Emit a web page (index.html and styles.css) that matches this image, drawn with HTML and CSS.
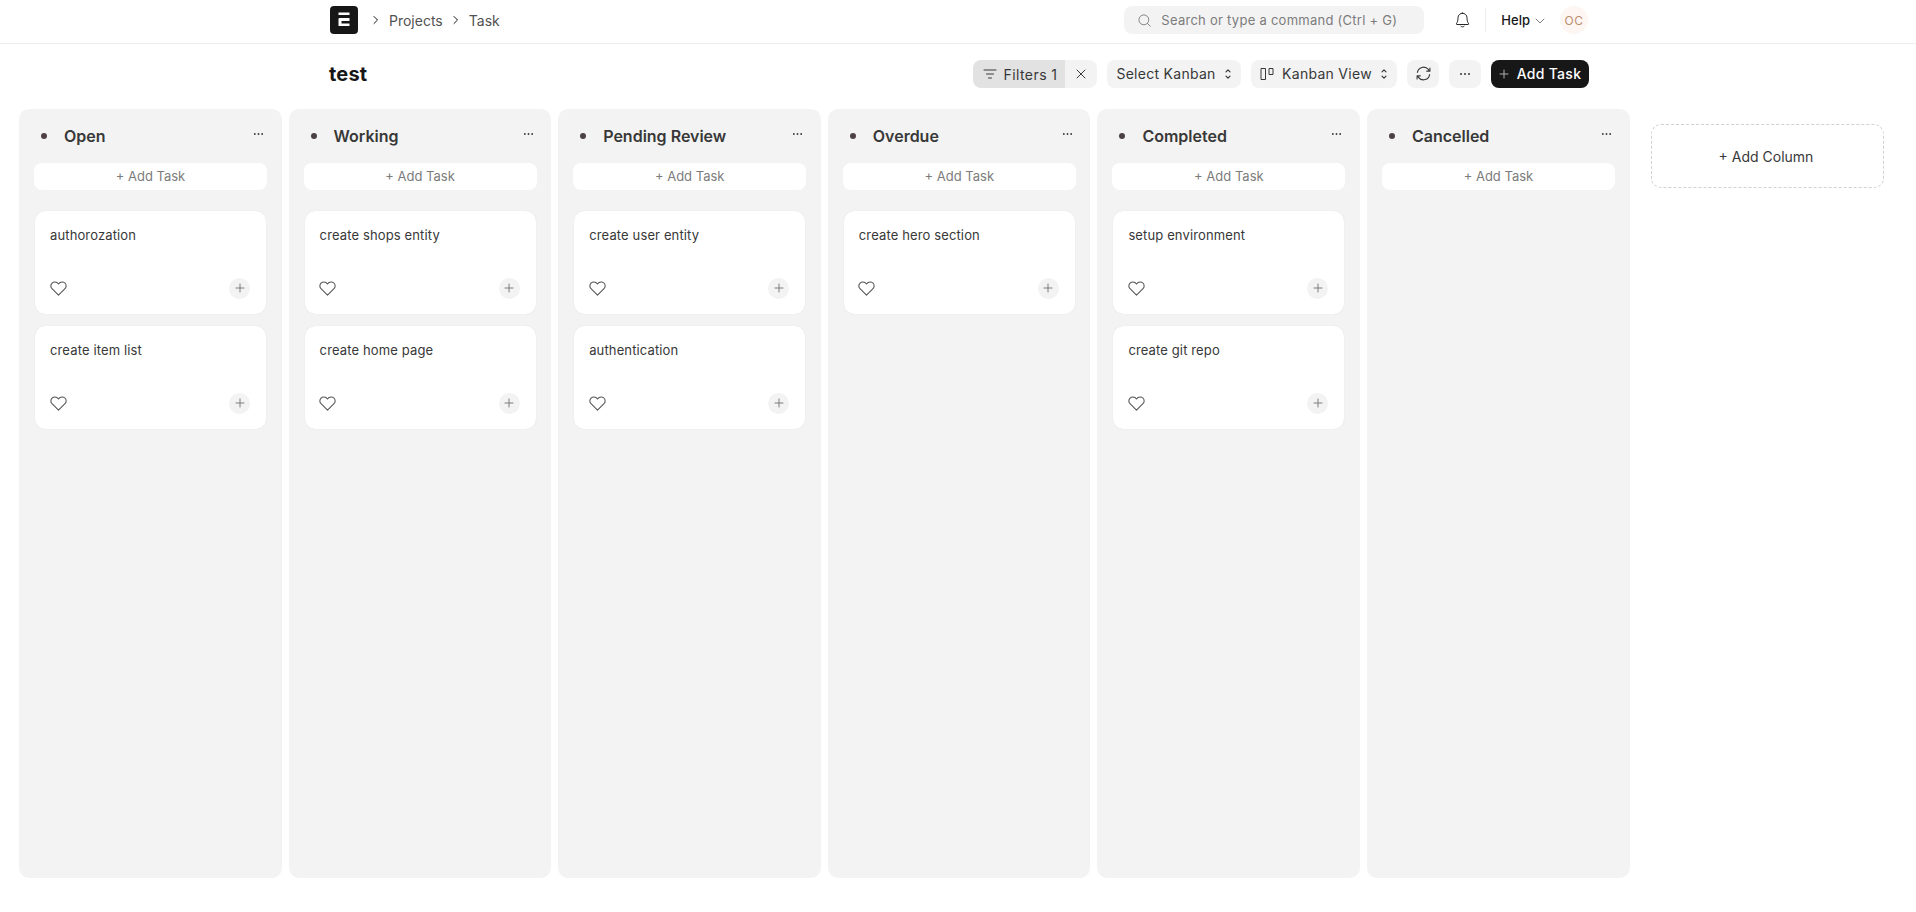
FILE: index.html
```html
<!DOCTYPE html>
<html lang="en">
<head>
<meta charset="utf-8">
<title>Task Kanban</title>
<link rel="stylesheet" href="styles.css">
</head>
<body>
<svg class="defs" width="0" height="0" aria-hidden="true">
  <symbol id="i-heart" viewBox="0 0 16 14"><path d="M8 13.2 1.900 7.200A3.600 3.600 0 0 1 .8 4.600C.8 2.500 2.500.8 4.600.8c1.400 0 2.600.7 3.400 2 .8-1.300 2-2 3.400-2 2.100 0 3.800 1.700 3.800 3.800 0 1-.4 1.900-1.100 2.600L8 13.200Z" fill="none" stroke="currentColor" stroke-width="1" stroke-linejoin="round"/></symbol>
  <symbol id="i-plus" viewBox="0 0 10 10"><path d="M5 1v8M1 5h8" fill="none" stroke="currentColor" stroke-width="1" stroke-linecap="round"/></symbol>
  <symbol id="i-dots" viewBox="0 0 12 4"><circle cx="2" cy="2" r="1" fill="currentColor"/><circle cx="6" cy="2" r="1" fill="currentColor"/><circle cx="10" cy="2" r="1" fill="currentColor"/></symbol>
  <symbol id="i-updown" viewBox="0 0 8 12"><path d="M2 3.800 4 1.800l2 2M2 8.200l2 2 2-2" fill="none" stroke="currentColor" stroke-width="1.200" stroke-linecap="round" stroke-linejoin="round"/></symbol>
  <symbol id="i-chev" viewBox="0 0 8 10"><path d="M2 1.500 5.500 5 2 8.500" fill="none" stroke="currentColor" stroke-width="1" stroke-linecap="round" stroke-linejoin="round"/></symbol>
</svg>

<header class="navbar">
  <div class="nav-inner">
    <svg class="logo" width="28" height="28" viewBox="0 0 28 28" aria-label="Logo"><rect width="28" height="28" rx="4" fill="#171717"/><path d="M8.500 6.500h11V9h-11zM8.500 20v-7a1 1 0 0 1 1-1h10v3h-8v2.500h8V20Z" fill="#fff"/></svg>
    <nav class="crumbs">
      <svg class="crumb-chev"><use href="#i-chev"/></svg><span>Projects</span>
      <svg class="crumb-chev"><use href="#i-chev"/></svg><span>Task</span>
    </nav>
    <div class="nav-right">
      <div class="search">
        <svg class="search-icon" width="13" height="13" viewBox="0 0 14 14"><circle cx="6.300" cy="6.300" r="5.300" fill="none" stroke="currentColor"/><path d="m10.200 10.200 3 3" stroke="currentColor" stroke-linecap="round"/></svg>
        <span>Search or type a command (Ctrl + G)</span>
      </div>
      <svg class="bell" width="15" height="16" viewBox="0 0 16 17"><path d="M8 1.200a4.800 4.800 0 0 0-4.800 4.800c0 3.300-.7 5-1.700 6.400-.3.400 0 .9.500.9h12c.5 0 .8-.5.500-.9-1-1.400-1.700-3.100-1.700-6.400A4.800 4.800 0 0 0 8 1.200ZM6.300 15.200c.9.900 2.500.9 3.400 0" fill="none" stroke="currentColor" stroke-linecap="round" stroke-linejoin="round"/></svg>
      <span class="divider"></span>
      <div class="help"><span>Help</span><svg width="10" height="6" viewBox="0 0 10 6"><path d="m1 1 4 4 4-4" fill="none" stroke="currentColor" stroke-linecap="round" stroke-linejoin="round"/></svg></div>
      <div class="avatar">OC</div>
    </div>
  </div>
</header>

<section class="page-head">
  <h1>test</h1>
  <div class="actions">
    <div class="filter-group">
      <button class="filter-main"><svg width="14" height="10" viewBox="0 0 14 10"><path d="M1 1h12M3.500 5h7M5.500 9h3" fill="none" stroke="currentColor" stroke-linecap="round"/></svg><span>Filters 1</span></button>
      <button class="filter-clear"><svg width="10" height="10" viewBox="0 0 10 10"><path d="m1 1 8 8M9 1 1 9" fill="none" stroke="currentColor" stroke-linecap="round"/></svg></button>
    </div>
    <button class="btn btn-select"><span>Select Kanban</span><svg class="updown"><use href="#i-updown"/></svg></button>
    <button class="btn btn-view"><svg width="14" height="14" viewBox="0 0 14 14"><path d="M1 1.500h4.500v11H1zM9 1.500h4v6H9z" fill="none" stroke="currentColor" stroke-linejoin="round"/></svg><span>Kanban View</span><svg class="updown"><use href="#i-updown"/></svg></button>
    <button class="btn btn-icon"><svg width="15" height="15" viewBox="0 0 14 14"><path d="M1.300 6A5.800 5.800 0 0 1 11.500 3.200L12.800 4.800M12.700 8A5.800 5.800 0 0 1 2.500 10.800L1.200 9.200M13 1.800v3h-3M1 12.200v-3h3" fill="none" stroke="currentColor" stroke-linecap="round" stroke-linejoin="round"/></svg></button>
    <button class="btn btn-icon"><svg class="dots"><use href="#i-dots"/></svg></button>
    <button class="btn btn-primary"><svg class="primary-plus"><use href="#i-plus"/></svg><span>Add Task</span></button>
  </div>
</section>

<main class="board">
  <section class="column">
    <div class="col-head"><span class="dot"></span><h2>Open</h2><svg class="dots"><use href="#i-dots"/></svg></div>
    <button class="add-task">+ Add Task</button>
    <article class="card"><p>authorozation</p><div class="card-foot"><svg class="heart"><use href="#i-heart"/></svg><span class="card-plus"><svg><use href="#i-plus"/></svg></span></div></article>
    <article class="card"><p>create item list</p><div class="card-foot"><svg class="heart"><use href="#i-heart"/></svg><span class="card-plus"><svg><use href="#i-plus"/></svg></span></div></article>
  </section>
  <section class="column">
    <div class="col-head"><span class="dot"></span><h2>Working</h2><svg class="dots"><use href="#i-dots"/></svg></div>
    <button class="add-task">+ Add Task</button>
    <article class="card"><p>create shops entity</p><div class="card-foot"><svg class="heart"><use href="#i-heart"/></svg><span class="card-plus"><svg><use href="#i-plus"/></svg></span></div></article>
    <article class="card"><p>create home page</p><div class="card-foot"><svg class="heart"><use href="#i-heart"/></svg><span class="card-plus"><svg><use href="#i-plus"/></svg></span></div></article>
  </section>
  <section class="column">
    <div class="col-head"><span class="dot"></span><h2>Pending Review</h2><svg class="dots"><use href="#i-dots"/></svg></div>
    <button class="add-task">+ Add Task</button>
    <article class="card"><p>create user entity</p><div class="card-foot"><svg class="heart"><use href="#i-heart"/></svg><span class="card-plus"><svg><use href="#i-plus"/></svg></span></div></article>
    <article class="card"><p>authentication</p><div class="card-foot"><svg class="heart"><use href="#i-heart"/></svg><span class="card-plus"><svg><use href="#i-plus"/></svg></span></div></article>
  </section>
  <section class="column">
    <div class="col-head"><span class="dot"></span><h2>Overdue</h2><svg class="dots"><use href="#i-dots"/></svg></div>
    <button class="add-task">+ Add Task</button>
    <article class="card"><p>create hero section</p><div class="card-foot"><svg class="heart"><use href="#i-heart"/></svg><span class="card-plus"><svg><use href="#i-plus"/></svg></span></div></article>
  </section>
  <section class="column">
    <div class="col-head"><span class="dot"></span><h2>Completed</h2><svg class="dots"><use href="#i-dots"/></svg></div>
    <button class="add-task">+ Add Task</button>
    <article class="card"><p>setup environment</p><div class="card-foot"><svg class="heart"><use href="#i-heart"/></svg><span class="card-plus"><svg><use href="#i-plus"/></svg></span></div></article>
    <article class="card"><p>create git repo</p><div class="card-foot"><svg class="heart"><use href="#i-heart"/></svg><span class="card-plus"><svg><use href="#i-plus"/></svg></span></div></article>
  </section>
  <section class="column">
    <div class="col-head"><span class="dot"></span><h2>Cancelled</h2><svg class="dots"><use href="#i-dots"/></svg></div>
    <button class="add-task">+ Add Task</button>
  </section>
  <button class="add-column">+ Add Column</button>
</main>
</body>
</html>
```
FILE: styles.css
```css
* { box-sizing: border-box; }
html, body { height: 100%; }
body {
  margin: 0;
  background: #fff;
  color: #383838;
  font-family: Inter, "Noto Sans", sans-serif;
  font-size: 14px;
  overflow: hidden;
}
button { font: inherit; color: inherit; border: 0; cursor: pointer; }
.defs { position: absolute; }

.navbar { height: 44px; border-bottom: 1px solid #ededed; }
.nav-inner { display: flex; align-items: center; height: 40px; padding: 0 328px 0 330px; }
.logo { flex: none; }
.crumbs { display: flex; align-items: center; margin-left: 14px; font-size: 14px; color: #525252; }
.crumb-chev { width: 8px; height: 10px; margin-right: 9px; color: #171717; }
.crumbs span + .crumb-chev { margin-left: 9px; }
.nav-right { display: flex; align-items: center; margin-left: auto; }
.search {
  display: flex; align-items: center; gap: 10px;
  width: 300px; height: 28px; padding-left: 14px;
  border-radius: 8px; background: #f3f3f3;
  color: #7c7c7c; font-size: 13px; letter-spacing: .02em;
}
.search-icon { color: #7c7c7c; }
.bell { margin-left: 31px; color: #171717; }
.divider { width: 1px; height: 24px; margin: 0 15px 0 15px; background: #ededed; }
.help { display: flex; align-items: center; gap: 5px; color: #171717; font-size: 13px; font-weight: 500; }
.help svg { color: #7c7c7c; margin-top: 1px; }
.avatar {
  display: flex; align-items: center; justify-content: center;
  width: 28px; height: 28px; margin-left: 15px;
  border-radius: 50%; background: #fdf6f3;
  color: #bc8f6f; font-size: 12px; letter-spacing: .04em;
}

.page-head { display: flex; align-items: center; justify-content: space-between; height: 65px; padding: 0 327px 5px 329px; }
h1 { margin: 0; color: #171717; font-size: 20px; font-weight: 700; letter-spacing: .01em; }
.actions { display: flex; gap: 10px; height: 28px; }
.filter-group { display: flex; border-radius: 8px; overflow: hidden; }
.filter-main {
  display: flex; align-items: center; gap: 7px;
  width: 92px; padding: 0 0 0 9.500px;
  background: #e2e2e2; letter-spacing: .03em;
}
.filter-clear { display: flex; align-items: center; justify-content: center; width: 32px; padding: 0; background: #f3f3f3; }
.btn {
  display: flex; align-items: center; justify-content: center;
  padding: 0 0 1px; border-radius: 8px; background: #f3f3f3; letter-spacing: .02em;
}
.btn-select { width: 134px; gap: 8px; }
.btn-view { width: 146px; gap: 8px; }
.btn-icon { width: 32px; }
.updown { width: 8px; height: 12px; color: #383838; }
.dots { width: 12px; height: 4px; color: #383838; }
.btn-primary { width: 98px; gap: 8px; background: #171717; color: #fff; font-weight: 500; }
.primary-plus { width: 10px; height: 10px; color: #b0b0b0; }

.board { display: flex; align-items: flex-start; gap: 7px; height: 769px; padding-left: 19px; }
.column {
  flex: none; width: 262.600px; height: 100%;
  padding: 0 15px;
  border-radius: 10px; background: #f3f3f3;
}
.col-head { position: relative; display: flex; align-items: center; height: 54px; padding-left: 7px; }
.dot { width: 6px; height: 6px; border-radius: 50%; background: #4c4047; }
.col-head h2 { margin: 0 0 0 17px; font-size: 16px; font-weight: 600; color: #383838; }
.col-head .dots { position: absolute; top: 23px; right: 2.500px; width: 11px; }
.add-task {
  display: block; width: 233px; height: 27px; padding: 0 0 2px;
  border-radius: 8px; background: #fff;
  color: #7c7c7c; font-size: 13px;
}
.card {
  display: flex; flex-direction: column; justify-content: space-between;
  width: 231px; height: 103px; margin: 12px 0 0 1px; padding: 16px 16px 15.500px 14.500px;
  border-radius: 10px; background: #fff;
  box-shadow: 0 0 1px rgba(0,0,0,.14);
}
.add-task + .card { margin-top: 21px; }
.card p { margin: 0 0 0 .5px; font-size: 13px; line-height: 17px; letter-spacing: .01em; color: #383838; }
.card-foot { display: flex; align-items: center; justify-content: space-between; }
.heart { width: 17px; height: 15px; color: #555; }
.card-plus {
  display: flex; align-items: center; justify-content: center;
  width: 21px; height: 21px; border-radius: 50%; background: #f3f3f3; color: #7c7c7c;
}
.card-plus svg { width: 10px; height: 10px; }
.add-column {
  flex: none; width: 233px; height: 64px; margin: 15px 0 0 14.400px; padding: 0 3px 0 0;
  border: 1px dashed #d1d1d1; border-radius: 10px; background: #fff;
  color: #383838; font-size: 14px;
}
```
